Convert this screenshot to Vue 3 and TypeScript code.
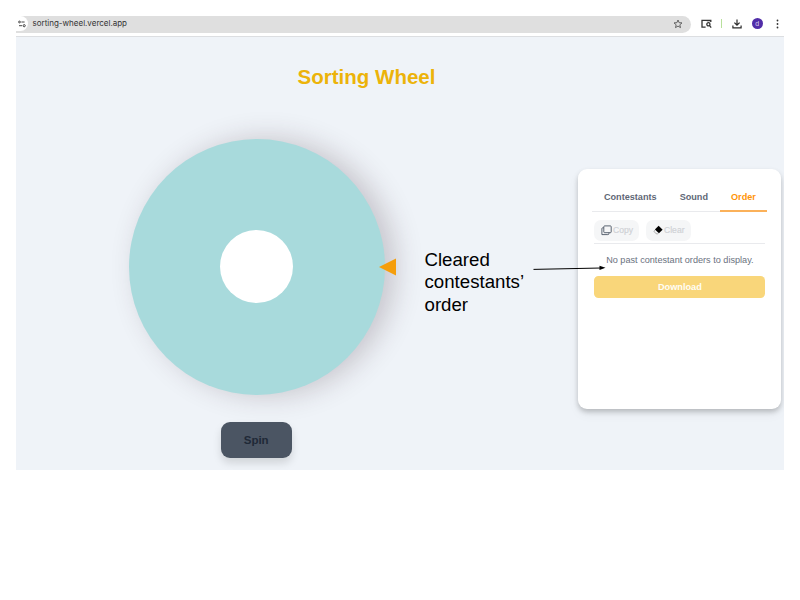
<script setup lang="ts">
import { ref } from 'vue'

const url = 'sorting-wheel.vercel.app'
const tabs = ['Contestants', 'Sound', 'Order']
const active = ref('Order')
</script>

<template>
  <div class="slide">
    <div class="browser">
      <header class="toolbar">
        <div class="address">
          <span class="site">
            <svg width="8" height="8" viewBox="0 0 8 8" fill="none" stroke="#333" stroke-width="0.9">
              <circle cx="1.5" cy="2" r="0.9" /><path d="M3.4 2H6.6M1 5.7H4" /><circle cx="6.2" cy="5.7" r="1.1" />
            </svg>
          </span>
          <span class="url">{{ url }}</span>
          <svg class="star" width="10" height="10" viewBox="0 0 10 10" fill="none" stroke="#555" stroke-width="0.9">
            <path d="M5 1 6.1 3.7 9 3.9 6.8 5.8 7.5 8.6 5 7.1 2.5 8.6 3.2 5.8 1 3.9 3.9 3.7Z" />
          </svg>
        </div>
        <svg class="search" width="11" height="10" viewBox="0 0 11 10" fill="none" stroke="#333" stroke-width="1.3">
          <path d="M4.6 8.2H1V1.4H9.8V3M5.8 1.6H9.8" /><circle cx="7.4" cy="5.3" r="1.6" /><path d="M8.4 6.4 10.2 8.7" />
        </svg>
        <span class="divider"></span>
        <svg class="download-icon" width="10" height="10" viewBox="0 0 10 10" fill="none" stroke="#2b2b2b" stroke-width="1.2">
          <path d="M5 0.5V6M2.4 3.6 5 6.2 7.6 3.6M0.9 6.6V8.9H9.1V6.6" />
        </svg>
        <span class="avatar">d</span>
        <svg class="more" width="3" height="10" viewBox="0 0 3 10" fill="#333">
          <circle cx="1.5" cy="1.5" r="0.9" /><circle cx="1.5" cy="5" r="0.9" /><circle cx="1.5" cy="8.5" r="0.9" />
        </svg>
      </header>

      <main class="page">
        <section class="game">
          <h1>Sorting Wheel</h1>
          <div class="wheel">
            <div class="hub"></div>
            <svg class="pointer" width="17" height="18" viewBox="0 0 17 18"><path d="M0 9 17 0.4V17.4Z" fill="#f59e0b" /></svg>
          </div>
          <button class="spin">Spin</button>
        </section>

        <aside class="card">
          <nav class="tabs">
            <button v-for="tab in tabs" :key="tab" class="tab" :class="{ active: tab === active }" @click="active = tab">{{ tab }}</button>
          </nav>
          <div class="content">
            <div class="actions">
              <button class="action">
                <svg width="11" height="11" viewBox="0 0 11 11" fill="none" stroke="#4b5563" stroke-width="0.9">
                  <rect x="2.8" y="0.9" width="7.4" height="6.8" rx="0.8" /><path d="M2.8 2.8H1.6Q0.9 2.8 0.9 3.6V9.6H6.8Q7.9 9.6 7.9 8.7V7.7" />
                </svg>
                <span>Copy</span>
              </button>
              <button class="action clear">
                <svg width="10" height="10" viewBox="0 0 10 10">
                  <path d="M5.6 0.8 9.6 4.7 5.9 8.3 1.9 4.4Z" fill="#000" />
                  <path d="M2.2 5.1 0.9 6.3 3.2 8.8H4.6L5.6 7.9" fill="none" stroke="#777" stroke-width="0.6" />
                </svg>
                <span>Clear</span>
              </button>
            </div>
            <p class="empty">No past contestant orders to display.</p>
            <button class="download">Download</button>
          </div>
        </aside>
      </main>
    </div>

    <p class="note">Cleared<br />contestants’<br />order</p>
    <svg class="arrow" width="74" height="10" viewBox="0 0 74 10">
      <path d="M0.5 6.4 68 5" stroke="#000" stroke-width="1" fill="none" />
      <path d="M66.5 2.7 72.5 4.8 66.5 7.1Z" fill="#000" />
    </svg>
  </div>
</template>

<style>
body {
  background: #fff;
}
</style>

<style scoped>
.slide {
  position: relative;
  box-sizing: border-box;
  width: 800px;
  height: 600px;
  padding: 16px;
  background: #fff;
  font-family: "Liberation Sans", Arial, sans-serif;
  overflow: hidden;
}
button {
  border: 0;
  padding: 0;
  font: inherit;
}
.browser {
  width: 768px;
  height: 454px;
  overflow: hidden;
}
.toolbar {
  display: flex;
  align-items: flex-start;
  box-sizing: border-box;
  height: 21px;
  border-bottom: 1px solid #dcdee1;
  background: #fff;
}
.address {
  display: flex;
  align-items: center;
  width: 675px;
  height: 17px;
  margin-right: 9.6px;
  padding-bottom: 2px;
  box-sizing: border-box;
  border-radius: 0 9px 9px 0;
  background: #dfdfdf;
}
.site {
  display: flex;
  align-items: center;
  justify-content: center;
  width: 12px;
  height: 15px;
  padding-right: 1px;
  box-sizing: border-box;
  border-radius: 0 8px 8px 0;
  background: #fff;
}
.url {
  flex: 1;
  margin-left: 4.5px;
  font-family: Inter, sans-serif;
  font-size: 8px;
  line-height: 15px;
  color: #333;
}
.star {
  margin-right: 8.5px;
}
.search {
  margin: 3px 9px 0 0;
}
.divider {
  width: 1px;
  height: 9px;
  margin: 3px 10px 0 0;
  background: #b8e09c;
}
.download-icon {
  margin: 3px 10px 0 0;
}
.avatar {
  width: 11px;
  height: 11px;
  margin: 2px 13px 0 0;
  border-radius: 50%;
  background: #512da8;
  color: #d9cff0;
  font-size: 7px;
  line-height: 11px;
  text-align: center;
}
.more {
  margin-top: 2.5px;
}
.page {
  display: flex;
  height: 433px;
  background: #eff3f8;
}
.game {
  width: 562.4px;
  display: flex;
  flex-direction: column;
}
h1 {
  margin: 28px 0 0 281.6px;
  font-size: 20.5px;
  line-height: 24px;
  font-weight: 700;
  color: #ecb30a;
  white-space: nowrap;
}
.wheel {
  position: relative;
  display: flex;
  align-items: center;
  justify-content: center;
  flex: none;
  width: 256px;
  height: 256px;
  margin: 49.5px 0 0 112.5px;
  border-radius: 50%;
  background: #a8dadc;
  box-shadow: 10px 0 28px rgba(60, 40, 50, 0.23);
}
.hub {
  width: 73px;
  height: 73px;
  border-radius: 50%;
  background: #fff;
}
.pointer {
  position: absolute;
  left: 250px;
  top: 119.5px;
}
.spin {
  width: 71px;
  height: 36px;
  margin: 27px 0 0 204.7px;
  flex: none;
  border-radius: 9px;
  background: #4b5563;
  color: #1f2937;
  font-size: 11.5px;
  font-weight: 700;
  box-shadow: 0 5px 8px rgba(0, 0, 0, 0.13);
}
.card {
  box-sizing: border-box;
  width: 203px;
  height: 239.4px;
  margin-top: 132.2px;
  padding: 13px 14px;
  border-radius: 9px;
  background: #fff;
  box-shadow: 0 3px 5px rgba(0, 0, 0, 0.2), 0 5px 12px rgba(0, 0, 0, 0.05);
}
.tabs {
  display: flex;
  height: 29.5px;
  box-sizing: border-box;
  border-bottom: 1.5px solid #e9eaed;
}
.tab {
  box-sizing: border-box;
  height: 29.5px;
  padding: 1.6px 11.5px 0;
  border-bottom: 2px solid transparent;
  background: none;
  color: #606776;
  font-size: 9.15px;
  font-weight: 700;
}
.tab.active {
  border-bottom-color: #fbb15a;
  color: #ff9408;
}
.content {
  padding: 8px 2px 0;
}
.actions {
  display: flex;
  gap: 7px;
  height: 24px;
  box-sizing: border-box;
  border-bottom: 1.5px solid #e9eaed;
}
.action {
  display: flex;
  align-items: center;
  box-sizing: border-box;
  width: 45px;
  height: 21px;
  padding-left: 6.6px;
  gap: 1px;
  border-radius: 7px;
  background: #f5f6f7;
  color: #cfd1d5;
  font-size: 8.6px;
  -webkit-text-stroke: 0.15px #cfd1d5;
}
.empty {
  margin: 10px 0 0;
  font-size: 9.15px;
  line-height: 12px;
  text-align: center;
  white-space: nowrap;
  color: #6b7280;
}
.download {
  display: block;
  width: 100%;
  height: 22.5px;
  margin-top: 10px;
  border-radius: 4.5px;
  background: #f9d67a;
  color: #fffdf5;
  font-size: 9.2px;
  font-weight: 700;
}
.note {
  position: absolute;
  left: 424.5px;
  top: 248.5px;
  margin: 0;
  font-size: 18.67px;
  line-height: 22.5px;
  color: #000;
}
.arrow {
  position: absolute;
  left: 533px;
  top: 263px;
}
</style>
